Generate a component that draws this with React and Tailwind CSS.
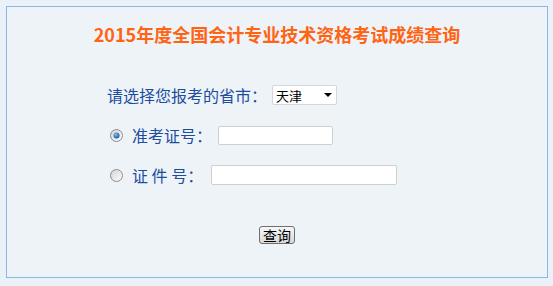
import React from 'react';

const font = { fontFamily: '"Noto Sans CJK SC", "Liberation Sans", sans-serif' };

function Radio({ checked }) {
  return (
    <svg width="13" height="13" viewBox="0 0 13 13" className="shrink-0">
      <defs>
        <linearGradient id={checked ? "rg1" : "rg2"} x1="0" y1="0" x2="1" y2="1">
          <stop offset="0" stopColor="#d2d2d2" />
          <stop offset="1" stopColor="#ffffff" />
        </linearGradient>
        <radialGradient id="dot" cx="0.4" cy="0.35" r="0.7">
          <stop offset="0" stopColor="#7fc0f5" />
          <stop offset="1" stopColor="#0e4f9a" />
        </radialGradient>
      </defs>
      <circle cx="6.5" cy="6.5" r="6" fill={`url(#${checked ? "rg1" : "rg2"})`} stroke="#8c8c8c" strokeWidth="1" />
      {checked && <circle cx="6.5" cy="6.5" r="3" fill="url(#dot)" />}
    </svg>
  );
}

export default function App() {
  return (
    <div className="w-[553px] h-[286px] bg-[#eaf1f9] pt-[6px] pl-[6px]" style={font}>
      <div className="w-[542px] h-[272px] border border-[#8fb7e6] bg-[#eef3f8] flex flex-col">
        {/* title */}
        <div className="pt-[15px] h-[40px] text-center text-[18px] leading-[24px] font-bold text-[#ff6414]">
          2015年度全国会计专业技术资格考试成绩查询
        </div>

        {/* province */}
        <div className="mt-[38px] pl-[100px] h-[20px] flex items-center text-[16px] text-[#1d4e9e]">
          <span className="leading-[20px]">请选择您报考的省市：</span>
          <div className="ml-[5px] w-[65px] h-[20px] bg-white border border-[#d6d6d6] rounded-[2px] flex items-center justify-between pl-[3px] pr-[4px]">
            <span className="text-[13px] text-black leading-none">天津</span>
            <span className="w-0 h-0 border-l-[4px] border-r-[4px] border-t-[4px] border-l-transparent border-r-transparent border-t-black" />
          </div>
        </div>

        {/* exam number */}
        <div className="mt-[20px] pl-[103px] h-[20px] flex items-center text-[16px] text-[#1d4e9e]">
          <Radio checked />
          <span className="ml-[9px] leading-[20px]">准考证号：</span>
          <div className="ml-[6px] w-[115px] h-[19px] bg-white border border-[#cfcfcf] rounded-[2px]" />
        </div>

        {/* id number */}
        <div className="mt-[20px] pl-[103px] h-[20px] flex items-center text-[16px] text-[#1d4e9e]">
          <Radio />
          <span className="ml-[9px] leading-[20px] whitespace-pre">证 件 号：</span>
          <div className="ml-[8px] w-[186px] h-[20px] bg-white border border-[#cfcfcf] rounded-[2px]" />
        </div>

        {/* submit */}
        <div className="mt-[41px] flex justify-center">
          <button className="w-[36px] h-[18px] border border-[#6f6f6f] rounded-[3px] bg-gradient-to-b from-[#f7f7f7] to-[#d9d9d9] text-[14px] leading-none text-black flex items-center justify-center">
            查询
          </button>
        </div>
      </div>
    </div>
  );
}
